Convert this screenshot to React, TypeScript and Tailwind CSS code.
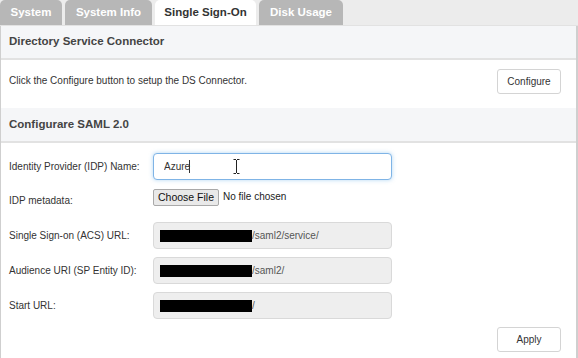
import { useState } from 'react';

const TABS: { label: string; w: string }[] = [
  { label: 'System', w: 'w-[62px]' },
  { label: 'System Info', w: 'w-[87px]' },
  { label: 'Single Sign-On', w: 'w-[101px]' },
  { label: 'Disk Usage', w: 'w-[84px]' },
];

const URL_FIELDS: { label: string; suffix: string }[] = [
  { label: 'Single Sign-on (ACS) URL:', suffix: '/saml2/service/' },
  { label: 'Audience URI (SP Entity ID):', suffix: '/saml2/' },
  { label: 'Start URL:', suffix: '/' },
];

export default function App() {
  const [active] = useState('Single Sign-On');
  const [idpName, setIdpName] = useState('Azure');

  return (
    <div className="relative h-[358px] w-[578px] overflow-hidden bg-white font-['Liberation_Sans',Arial,sans-serif] text-[10px] text-[#333]">
      {/* Tabs */}
      <div className="flex h-[26px] items-end gap-[3px] border-b border-[#e2e2e2] bg-[#ececec]">
        {TABS.map((t) => (
          <div
            key={t.label}
            className={
              t.label === active
                ? `${t.w} flex h-[25px] items-center justify-center rounded-t-[5px] bg-white text-[11.5px] font-bold text-[#333]`
                : `${t.w} flex h-[25px] items-center justify-center rounded-t-[5px] bg-[#b7b7b7] text-[11.5px] font-bold text-white`
            }
          >
            {t.label}
          </div>
        ))}
      </div>

      <div className="h-[332px] border-l border-r-2 border-[#cfcfcf]">
        {/* Directory Service Connector */}
        <div className="flex h-[34px] items-center border-b-2 border-[#e2e2e2] bg-[#f5f6f8] px-[8px] text-[11.5px] font-bold text-[#444]">
          Directory Service Connector
        </div>
        <div className="flex h-[41px] items-center justify-between pl-[8px] pr-[15px]">
          <span>Click the Configure button to setup the DS Connector.</span>
          <button className="mt-[2px] h-[25px] w-[64px] rounded-[3px] border border-[#d4d4d4] bg-white text-[10px] text-[#333]">
            Configure
          </button>
        </div>

        {/* SAML */}
        <div className="mt-[7px] flex h-[35px] items-center border-b-2 border-[#e2e2e2] bg-[#f5f6f8] px-[8px] text-[11.5px] font-bold text-[#444]">
          Configurare SAML 2.0
        </div>

        <div className="mt-[10px] flex items-center">
          <label className="w-[152px] pl-[8px]">Identity Provider (IDP) Name:</label>
          <div className="relative">
            <input
              value={idpName}
              onChange={(e) => setIdpName(e.target.value)}
              className="h-[27px] w-[239px] rounded-[4px] border border-[#7fb4e6] bg-white px-[10px] text-[10px] text-[#333] shadow-[0_0_4px_rgba(102,175,233,0.5)] outline-none"
            />
            <span className="absolute left-[36px] top-[7px] h-[13px] w-px bg-[#333]" />
            <svg className="absolute left-[80px] top-[6px]" width="7" height="15" viewBox="0 0 7 15">
              <path d="M0.5 0.5h2.5M4 0.5h2.5M3.5 1v13M0.5 14.5h2.5M4 14.5h2.5" stroke="#222" strokeWidth="1" fill="none" />
            </svg>
          </div>
        </div>

        <div className="mt-[9px] flex items-start">
          <label className="w-[152px] pl-[8px] pt-[4px]">IDP metadata:</label>
          <div className="flex items-center gap-[4px]">
            <button className="h-[17px] rounded-[2px] border border-[#a9a9a9] bg-[#e9e9e9] px-[4px] text-[10.5px] leading-none text-[#111]">
              Choose File
            </button>
            <span className="-mt-[3px] text-[10px] text-[#222]">No file chosen</span>
          </div>
        </div>

        {URL_FIELDS.map((f, i) => (
          <div key={f.label} className={i === 0 ? 'mt-[14px] flex items-center' : 'mt-[8px] flex items-center'}>
            <label className="w-[152px] pl-[8px]">{f.label}</label>
            <div className="flex h-[27px] w-[239px] items-center rounded-[4px] border border-[#d9d9d9] bg-[#eeeeee] px-[6px] text-[#555]">
              <span className="h-[12px] w-[92px] bg-black" />
              <span>{f.suffix}</span>
            </div>
          </div>
        ))}

        <div className="mt-[8px] flex justify-end pr-[15px]">
          <button className="h-[25px] w-[64px] rounded-[3px] border border-[#d4d4d4] bg-white text-[10px] text-[#333]">
            Apply
          </button>
        </div>
      </div>
    </div>
  );
}
